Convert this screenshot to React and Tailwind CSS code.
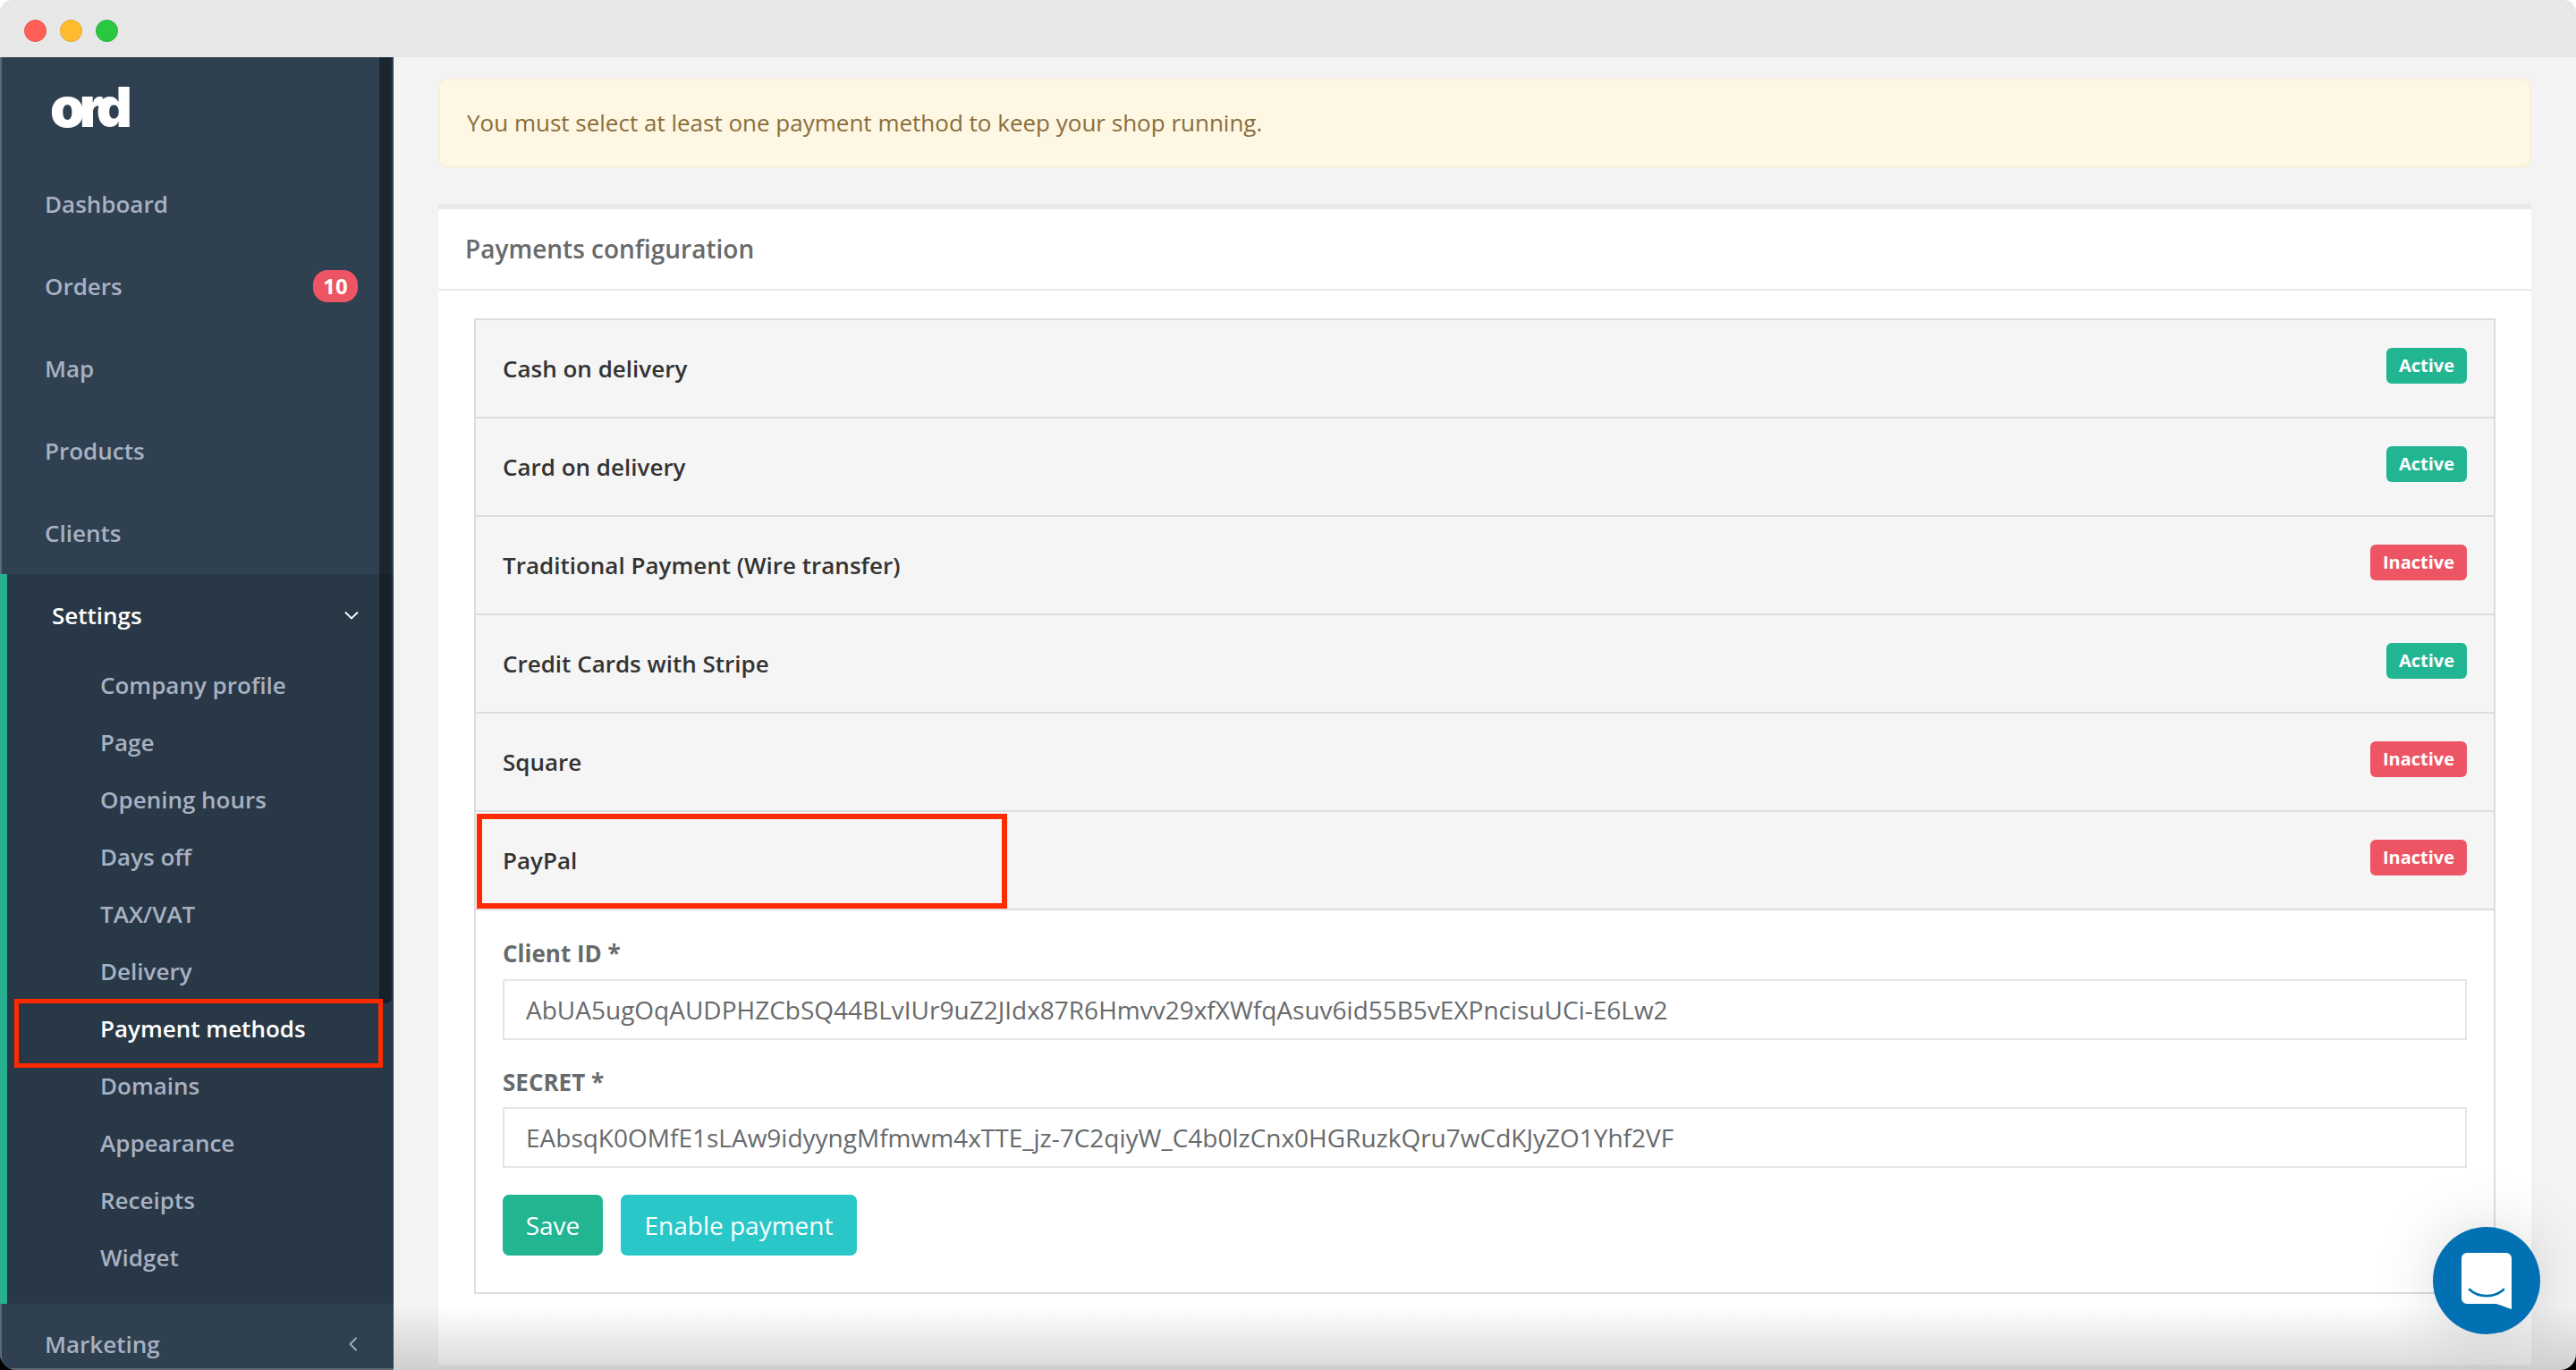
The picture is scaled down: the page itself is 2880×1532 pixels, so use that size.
const navTop = [
  { label: "Dashboard" },
  { label: "Orders", badge: "10" },
  { label: "Map" },
  { label: "Products" },
  { label: "Clients" },
];
const subNav = ["Company profile", "Page", "Opening hours", "Days off", "TAX/VAT", "Delivery", "Payment methods", "Domains", "Appearance", "Receipts", "Widget"];
const methods = [
  { name: "Cash on delivery", active: true },
  { name: "Card on delivery", active: true },
  { name: "Traditional Payment (Wire transfer)", active: false },
  { name: "Credit Cards with Stripe", active: true },
  { name: "Square", active: false },
  { name: "PayPal", active: false },
];

function Field({ label, value, className, inputClass }) {
  return (
    <div className={className}>
      <label className="block text-[26px] leading-[36px] font-bold text-[#676a6c]">{label}</label>
      <div className={`${inputClass} h-[68px] border-2 border-[#e5e6e7] bg-white px-[24px] flex items-center text-[28px] text-[#676a6c] whitespace-nowrap overflow-hidden`}>{value}</div>
    </div>
  );
}

export default function App() {
  return (
    <div className="relative w-[2880px] h-[1532px] overflow-hidden bg-[linear-gradient(#fff_50%,#000_50%)] font-['Open_Sans',sans-serif]">
      <div className="relative flex flex-col h-full overflow-hidden rounded-t-[14px] rounded-b-[18px]">
        <div className="h-[64px] shrink-0 bg-[#e7e7e7] flex items-center gap-[15px] pl-[27px] pt-[4px]">
          <span className="w-[25px] h-[25px] rounded-full bg-[#ff5f57] border border-[#e5534b]" />
          <span className="w-[25px] h-[25px] rounded-full bg-[#febc2e] border border-[#e0a52a]" />
          <span className="w-[25px] h-[25px] rounded-full bg-[#28c840] border border-[#24b339]" />
        </div>
        <div className="flex flex-1 min-h-0">
          <aside className="relative w-[440px] shrink-0 bg-[#2f4050] flex flex-col text-[26px] font-semibold text-[#a7b1c2]">
            <div className="h-[118px] border-l-2 border-[#5d6974] pl-[54px] pt-[21px]">
              <div className="font-['Inter',sans-serif] font-black text-white text-[62px] leading-[70px] tracking-[-6px]">ord</div>
            </div>
            {navTop.map((n) => (
              <div key={n.label} className="h-[92px] border-l-2 border-[#5d6974] pl-[48px] pr-[40px] flex items-center justify-between">
                <span>{n.label}</span>
                {n.badge && (
                  <span className="w-[50px] h-[36px] rounded-[16px] bg-[#ed5565] text-white text-[24px] leading-none font-bold flex items-center justify-center">{n.badge}</span>
                )}
              </div>
            ))}
            <div className="bg-[#293846] border-l-[8px] border-[#26b08f] h-[816px] shrink-0">
              <div className="h-[92px] pl-[50px] pr-[39px] flex items-center justify-between text-white">
                <span>Settings</span>
                <svg width="16" height="10" viewBox="0 0 16 10" fill="none" stroke="#fff" strokeWidth="1.8"><path d="M1 1.5l7 7 7-7" /></svg>
              </div>
              {subNav.map((s) => (
                <div key={s} className={`h-[64px] pl-[104px] flex items-center ${s === "Payment methods" ? "text-white" : ""}`}>{s}</div>
              ))}
            </div>
            <div className="flex-1 border-l-2 border-b-2 border-[#5d6974] pl-[48px] pr-[40px] flex items-center justify-between pt-[18px]">
              <span>Marketing</span>
              <svg width="10" height="16" viewBox="0 0 10 16" fill="none" stroke="#a7b1c2" strokeWidth="1.8"><path d="M8.500 1l-7 7 7 7" /></svg>
            </div>
            <div className="absolute left-[424px] top-0 w-[14px] h-[1058px] rounded-b-[8px] bg-[#000000]/40" />
            <div className="absolute left-[16px] top-[1053px] w-[412px] h-[77px] border-[5px] border-[#ff2a00]" />
          </aside>
          <main className="relative flex-1 min-w-0 bg-[#f3f3f4] px-[50px] pt-[24px] pb-[6px] flex flex-col">
            <div className="h-[99px] shrink-0 rounded-[8px] border-2 border-[#faf0d8] bg-[#fef7e3] pl-[30px] flex items-center text-[26px] text-[#8a6d3b]">
              You must select at least one payment method to keep your shop running.
            </div>
            <div className="mt-[41px] flex-1 min-h-0 bg-white border-t-[6px] border-[#e7eaec]">
              <div className="h-[91px] border-b-2 border-[#e7eaec] pl-[30px] pb-[2px] flex items-center text-[28px] font-semibold text-[#676a6c]">Payments configuration</div>
              <div className="mx-[40px] mt-[31px] border-2 border-[#dddddd]">
                {methods.map((m) => (
                  <div key={m.name} className="h-[110px] bg-[#f5f5f5] border-b-2 border-[#dddddd] pl-[30px] pr-[30px] flex justify-between">
                    <span className="mt-[36px] text-[26px] leading-[36px] font-semibold text-[#333333]">{m.name}</span>
                    {m.active ? (
                      <span className="mt-[31px] w-[90px] h-[40px] rounded-[6px] bg-[#21b592] text-white text-[20px] font-bold flex items-center justify-center">Active</span>
                    ) : (
                      <span className="mt-[31px] w-[108px] h-[40px] rounded-[6px] bg-[#ed5565] text-white text-[20px] font-bold flex items-center justify-center">Inactive</span>
                    )}
                  </div>
                ))}
                <div className="px-[30px] pt-[30px] pb-[41px]">
                  <Field inputClass="mt-[11px]" label="Client ID *" value="AbUA5ugOqAUDPHZCbSQ44BLvIUr9uZ2JIdx87R6Hmvv29xfXWfqAsuv6id55B5vEXPncisuUCi-E6Lw2" />
                  <Field inputClass="mt-[10px]" className="mt-[29px]" label="SECRET *" value="EAbsqK0OMfE1sLAw9idyyngMfmwm4xTTE_jz-7C2qiyW_C4b0lzCnx0HGRuzkQru7wCdKJyZO1Yhf2VF" />
                  <div className="mt-[30px] flex gap-[20px]">
                    <button className="w-[112px] h-[68px] rounded-[7px] bg-[#21b592] text-white text-[28px]">Save</button>
                    <button className="w-[264px] h-[68px] rounded-[7px] bg-[#29c7c8] text-white text-[28px]">Enable payment</button>
                  </div>
                </div>
              </div>
            </div>
            <div className="absolute left-[93px] top-[846px] w-[593px] h-[106px] border-[6px] border-[#ff2a00]" />
            <div className="absolute inset-x-0 bottom-0 h-[72px] pointer-events-none bg-[linear-gradient(rgba(0,0,0,0),rgba(0,0,0,0.15))]" />
            <div className="absolute right-[40px] bottom-[40px] w-[120px] h-[120px] rounded-full bg-[#0271b3] shadow-[0_0_70px_rgba(0,0,0,0.15)] flex items-center justify-center">
              <svg width="56" height="63" viewBox="0 0 56 63">
                <path d="M6 0h44a6 6 0 0 1 6 6v57l-17-6H6a6 6 0 0 1-6-6V6a6 6 0 0 1 6-6z" fill="#fff" />
                <path d="M9 41c10 9.500 28 9.500 38 0" fill="none" stroke="#0271b3" strokeWidth="2.6" strokeLinecap="round" />
              </svg>
            </div>
          </main>
        </div>
      </div>
    </div>
  );
}
